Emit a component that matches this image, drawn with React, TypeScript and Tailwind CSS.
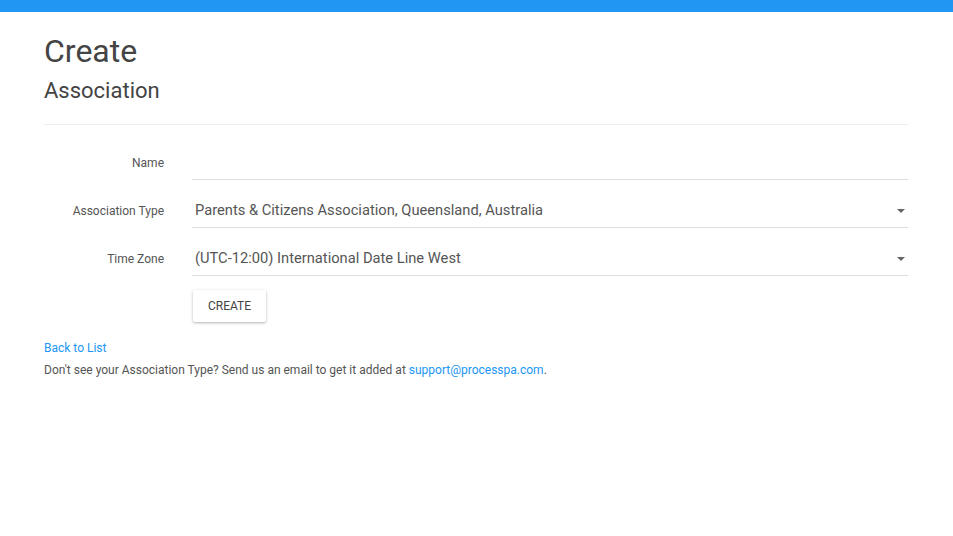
export default function App() {
  const rows = [
    { label: 'Name', value: '', select: false },
    { label: 'Association Type', value: 'Parents & Citizens Association, Queensland, Australia', select: true },
    { label: 'Time Zone', value: '(UTC-12:00) International Date Line West', select: true },
  ]

  return (
    <div className="min-h-[536px] bg-white font-['Roboto',sans-serif] text-[#555]">
      <div className="h-3 bg-[#2196f3]" />
      <main className="pl-[44px] pr-[45px]">
        <h1 className="mt-[19px] text-[32px] leading-[40px] text-[#444]">Create</h1>
        <h2 className="mt-[5px] text-[22px] leading-[30px] text-[#444]">Association</h2>
        <hr className="mt-[18px] border-t border-[#eee]" />

        <form className="mt-[21px] flex flex-col gap-[14px]">
          {rows.map((row) => (
            <div key={row.label} className="flex h-[34px] items-center">
              <label className="w-[120px] shrink-0 text-right text-[12px] text-[#555]">{row.label}</label>
              <div className="ml-[28px] flex h-full flex-1 items-center border-b border-[#ddd] pl-[3px]">
                <span className="flex-1 text-[14.7px] text-[#555]">{row.value}</span>
                {row.select && (
                  <span className="mr-[3px] h-0 w-0 border-x-[4px] border-t-[4px] border-x-transparent border-t-[#666]" />
                )}
              </div>
            </div>
          ))}
          <div className="pl-[149px]">
            <button
              type="button"
              className="h-[32px] w-[73px] rounded-[2px] bg-white text-[12px] font-normal text-[#444] shadow-[0_1px_3px_rgba(0,0,0,0.3)]"
            >
              CREATE
            </button>
          </div>
        </form>

        <a className="mt-[19px] block text-[12px] leading-[14px] text-[#2196f3]">Back to List</a>
        <p className="mt-[8px] text-[12px] leading-[14px] text-[#555]">
          Don't see your Association Type? Send us an email to get it added at{' '}
          <a className="text-[#2196f3]">support@processpa.com</a>.
        </p>
      </main>
    </div>
  )
}
